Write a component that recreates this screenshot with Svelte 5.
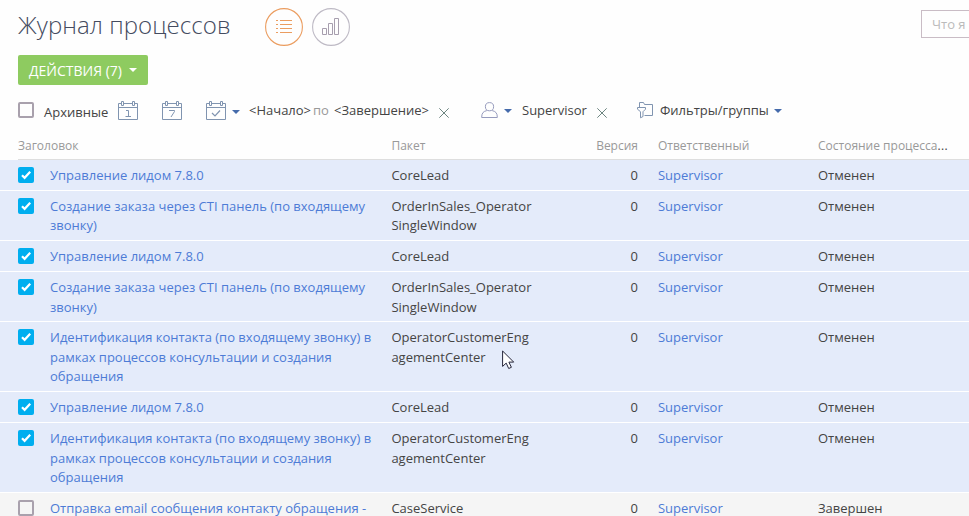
<script>
  const lead = 'Управление лидом 7.8.0';
  const order = ['Создание заказа через CTI панель (по входящему', 'звонку)'];
  const identity = ['Идентификация контакта (по входящему звонку) в', 'рамках процессов консультации и создания', 'обращения'];
  const single = ['OrderInSales_Operator', 'SingleWindow'];
  const engagement = ['OperatorCustomerEng', 'agementCenter'];

  const row = (title, pack, checked = true, status = 'Отменен') => ({ title, pack, checked, status });
  const rows = [
    row([lead], ['CoreLead']),
    row(order, single),
    row([lead], ['CoreLead']),
    row(order, single),
    row(identity, engagement),
    row([lead], ['CoreLead']),
    row(identity, engagement),
    row(['Отправка email сообщения контакту обращения -'], ['CaseService'], false, 'Завершен')
  ];
</script>

{#snippet calendar(kind)}
  <svg class="calendar" width="20" height="20" viewBox="0 0 20 20" fill="none" stroke="#8094b0">
    <path d="M3 2.5H.5v16h19v-16H17M6 2.5h8M.5 6.5h19" />
    <path d="M3.5.5h2v4h-2zM14.5.5h2v4h-2z" />
    {#if kind === 'check'}
      <path d="M6 12l3 3 5-5.5" stroke-width="1.2" />
    {:else if kind === '1'}
      <path d="M8 9.5h2.5v6M7.5 15.5h5.5" />
    {:else}
      <path d="M7 9.5h5.5v1L9 16" />
    {/if}
  </svg>
{/snippet}

{#snippet cross()}
  <svg class="cross" width="10" height="10" viewBox="0 0 10 10" fill="none" stroke="#6d8580"><path d="M.3.3l9.4 9.4M9.7.3L.3 9.7" /></svg>
{/snippet}

{#snippet caret()}
  <svg class="caret" width="8" height="4" viewBox="0 0 8 4"><path d="M0 0h8L4 4z" fill="currentColor" /></svg>
{/snippet}

<main>
  <header>
    <h1>Журнал процессов</h1>
    <button class="view active" aria-label="Список">
      <svg width="38" height="38" viewBox="0 0 38 38" fill="none" stroke="#eb9d60">
        <circle cx="19" cy="19" r="18.4" stroke-width="1.1" />
        <path d="M11 12.5h2m2 0h12M11 16.5h2m2 0h12M11 20.5h2m2 0h12M11 24.5h2m2 0h12" />
      </svg>
    </button>
    <button class="view" aria-label="Аналитика">
      <svg width="38" height="38" viewBox="0 0 38 38" fill="none">
        <circle cx="19" cy="19" r="18.4" stroke="#bebac5" stroke-width="1.1" />
        <path d="M10.5 20.5h4v6h-4zM16.5 15.5h4v11h-4zM22.5 10.5h4v16h-4z" stroke="#a79eae" />
      </svg>
    </button>
    <div class="search">Что я</div>
  </header>

  <button class="actions"><span>ДЕЙСТВИЯ (7)</span>{@render caret()}</button>

  <div class="filters">
    <span class="box"></span>
    <span class="archive">Архивные</span>
    <span class="cal first">{@render calendar('1')}</span>
    <span class="cal">{@render calendar('7')}</span>
    <span class="cal last">{@render calendar('check')}{@render caret()}</span>
    <span class="period"><span>&lt;Начало&gt;</span><span class="to">по</span><span>&lt;Завершение&gt;</span></span>
    {@render cross()}
    <span class="person">
      <svg width="17" height="17" viewBox="0 0 17 17" fill="none" stroke="#969bbd">
        <circle cx="8.5" cy="4.7" r="4.1" />
        <path d="M5.8 8.6C2.5 9.3.7 11 .7 15v.5h15.6V15c0-4-1.8-5.7-5.1-6.4" />
      </svg>
      {@render caret()}
    </span>
    <span class="owner">Supervisor</span>
    {@render cross()}
    <span class="groups">
      <svg width="16" height="17" viewBox="0 0 16 17" fill="none" stroke="#8094b0">
        <path d="M2.5 5V.5h4l1 2h8v11h-8" />
        <path d="M.5 5.5h8v1.7L6 9.7v4.8l-2.5 1.3V9.7L.5 7.2z" />
      </svg>
      <span>Фильтры/группы</span>
      {@render caret()}
    </span>
  </div>

  <div class="grid head">
    <span>Заголовок</span><span></span><span>Пакет</span><span class="version">Версия</span><span>Ответственный</span><span>Состояние процесса<b>...</b></span>
  </div>

  {#each rows as item, index}
    <div class="grid row" class:selected={item.checked} class:double={item.title.length === 2} class:tight={index === 1}>
      <span class="box" class:checked={item.checked}>
        {#if item.checked}
          <svg width="16" height="16" viewBox="0 0 16 16"><path d="M4 8.2l2.6 2.6 5.6-6" fill="none" stroke="#fff" stroke-width="2.2" /></svg>
        {/if}
      </span>
      <span class="link title">{#each item.title as line}<span class="line">{line}</span>{/each}</span>
      <span>{#each item.pack as line}<span class="line">{line}</span>{/each}</span>
      <span class="version">0</span>
      <span class="link">Supervisor</span>
      <span>{item.status}</span>
    </div>
  {/each}

  <svg class="cursor" width="13" height="20" viewBox="0 0 13 20"><path d="M.6 1v15.4l3.6-3.3 2.5 5.4 2.7-1.2-2.5-5.2h4.8z" fill="#fff" stroke="#25253a" /></svg>
</main>

<style>
  :global(body) { margin: 0; background: #fefefe; }
  main {
    position: relative;
    width: 969px;
    height: 516px;
    overflow: hidden;
    font: 13px/19.5px "Open Sans", "Noto Sans", sans-serif;
    color: #444;
    white-space: nowrap;
  }
  svg { display: block; flex: none; }
  button { border: 0; padding: 0; background: none; font: inherit; }
  header { display: flex; height: 55px; padding-left: 18px; align-items: flex-start; }
  h1 { flex: none; margin: 8px 0 0; width: 247px; font-size: 24px; line-height: 34px; font-weight: 300; letter-spacing: .07px; color: #444b5f; }
  .view { flex: none; margin: 8px 9px 0 0; }
  .search {
    box-sizing: border-box;
    width: 160px;
    height: 28px;
    flex: none;
    margin: 10px 0 0 562px;
    border: 1px solid #c9bcc5;
    padding: 4px 10px;
    color: #bbb;
  }
  .actions {
    display: flex;
    align-items: center;
    width: 130px;
    height: 30px;
    margin-left: 18px;
    padding: 1px 0 0 11px;
    border-radius: 2px;
    background: #8ecb60;
    color: #fff;
    font-size: 14px;
  }
  .actions span { width: 100px; text-align: left; }
  .actions .caret { margin-top: -2px; }
  .filters { display: flex; align-items: flex-start; height: 51px; box-sizing: border-box; padding: 16px 0 0 18px; }
  .box { box-sizing: border-box; width: 16px; height: 16px; border: 2px solid #a9a1ad; border-radius: 2px; }
  .archive { width: 74px; margin: 2px 0 0 10px; }
  .filters > .box { margin-top: 1px; }
  .cal { width: 44px; }
  .cal.last { display: flex; align-items: center; gap: 6px; color: #456bab; }
  .cal.last .caret { margin-top: 1px; }
  .period { display: flex; width: 190px; margin-left: -1px; }
  .period .to { color: #999; margin: 0 5px 0 2px; }
  .filters .cross { margin-top: 7px; }
  .person { display: flex; align-items: center; gap: 6px; margin: 1px 10px 0 32px; color: #456bab; }
  .owner { width: 75px; }
  .groups { display: flex; align-items: center; gap: 6px; margin-left: 30px; }
  .groups > svg:first-child { margin: -1px 1px 0 0; }
  .groups .caret { margin-left: -1px; color: #456bab; }
  .grid { display: grid; grid-template-columns: 32px 341.4px 186.6px 80px 160px 151px; padding-left: 18px; }
  .version { text-align: right; padding-right: 20px; }
  .head { height: 23px; margin-left: 18px; padding-left: 0; border-bottom: 1px solid #dedede; color: #999; font-size: 12px; }
  .head b { color: #444; font-weight: 400; letter-spacing: .3px; }
  .row { padding-top: 6px; padding-bottom: 4.5px; border-bottom: 1px solid #fff; background: #f5f5f5; }
  .row.double { padding-bottom: 4px; }
  .row.tight { padding-bottom: 5px; line-height: 19px; }
  .row.selected { background: #e4ebfa; }
  .row .box { margin-top: 1px; }
  .row .box.checked { border: 0; background: #00aeef; }
  .line { display: block; }
  .link { color: #4d7bd6; }
  .cursor { position: absolute; left: 502px; top: 350px; }
</style>
